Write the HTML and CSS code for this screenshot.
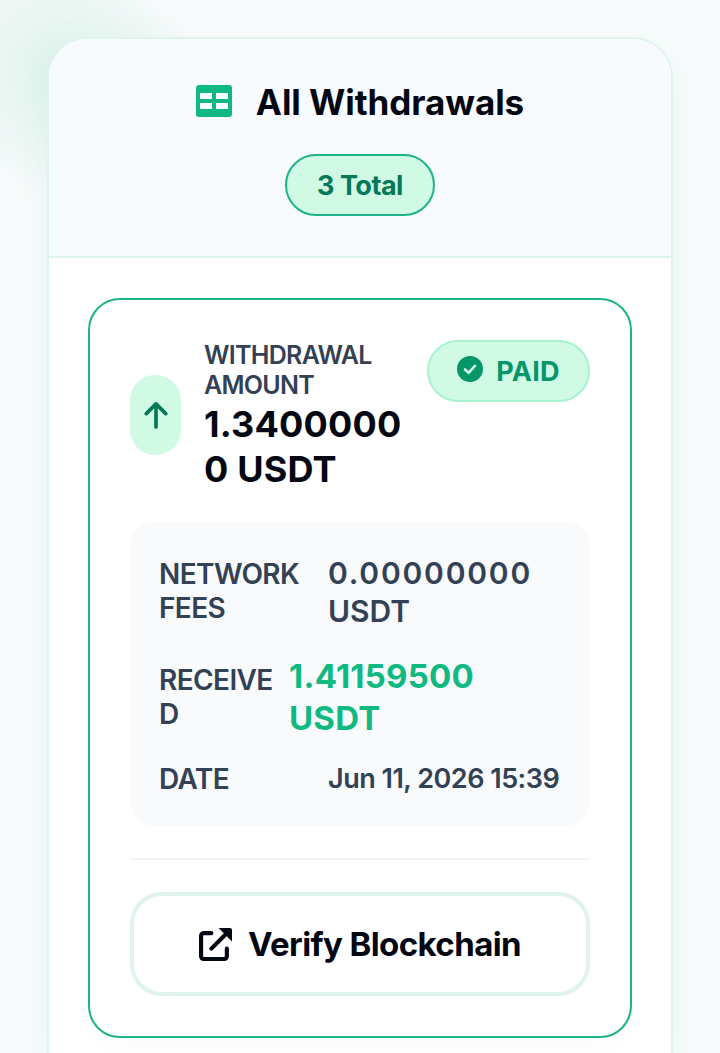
FILE: index.html
```html
<!DOCTYPE html>
<html lang="en">
<head>
    <meta charset="UTF-8">
    <meta name="viewport" content="width=device-width, initial-scale=1.0">
    <title>All Withdrawals</title>
    <link rel="stylesheet" href="styles.css">
</head>
<body>
    <div class="panel">
        <div class="panel-head">
            <h1 class="panel-title">
                <svg class="table-icon" viewBox="0 0 36 32" aria-hidden="true">
                    <path fill-rule="evenodd" fill="#10b981" d="M3 0h30a3 3 0 0 1 3 3v26a3 3 0 0 1-3 3H3a3 3 0 0 1-3-3V3a3 3 0 0 1 3-3zM4 8v6h12V8zM20 8v6h12V8zM4 18v6h12v-6zM20 18v6h12v-6z"/>
                </svg>
                <span>All Withdrawals</span>
            </h1>
            <span class="total-pill">3 Total</span>
        </div>

        <div class="panel-body">
            <div class="tx-card">
                <div class="tx-top">
                    <div class="arrow-box">
                        <svg class="arrow-icon" viewBox="0 0 26 30" aria-hidden="true">
                            <path d="M13 28V3M2.500 13.500 13 3l10.500 10.500" fill="none" stroke="#047857" stroke-width="4" stroke-linecap="round" stroke-linejoin="round"/>
                        </svg>
                    </div>
                    <div class="tx-amount">
                        <div class="tx-label">WITHDRAWAL<br>AMOUNT</div>
                        <div class="tx-value">1.3400000<br>0 USDT</div>
                    </div>
                    <div class="paid-badge">
                        <svg class="check-icon" viewBox="0 0 26 26" aria-hidden="true">
                            <circle cx="13" cy="13" r="13" fill="#059669"/>
                            <path d="M8 13.500l3.500 3.300L18 9.800" fill="none" stroke="#d1fae5" stroke-width="2.600" stroke-linecap="round" stroke-linejoin="round"/>
                        </svg>
                        <span>PAID</span>
                    </div>
                </div>

                <div class="details">
                    <div class="detail-row detail-row-fees">
                        <div class="detail-label">NETWORK<br>FEES</div>
                        <div class="detail-value"><span class="digits">0.00000000</span><br>USDT</div>
                    </div>
                    <div class="detail-row detail-row-wide">
                        <div class="detail-label">RECEIVE<br>D</div>
                        <div class="detail-value detail-value-green">1.41159500<br>USDT</div>
                    </div>
                    <div class="detail-row detail-row-date">
                        <div class="detail-label">DATE</div>
                        <div class="detail-value detail-value-date">Jun 11, 2026 15:39</div>
                    </div>
                </div>

                <div class="divider"></div>

                <a class="verify-btn" href="#">
                    <svg class="link-icon" viewBox="0 0 32 32" aria-hidden="true">
                        <path d="M12 5H4.500A2.500 2.500 0 0 0 2 7.500v20A2.500 2.500 0 0 0 4.500 30h20a2.500 2.500 0 0 0 2.500-2.500V20" fill="none" stroke="#030712" stroke-width="4" stroke-linecap="round"/>
                        <path d="M12 20 25 7" fill="none" stroke="#030712" stroke-width="4" stroke-linecap="round"/>
                        <path d="M19 0h11a2 2 0 0 1 2 2v11z" fill="#030712"/>
                    </svg>
                    <span>Verify Blockchain</span>
                </a>
            </div>
        </div>
    </div>
</body>
</html>
```

FILE: styles.css
```css
/* page */
html, body {
    height: 1053px;
    overflow: hidden;
}

body {
    margin: 0;
    padding: 37px 47px 0;
    box-sizing: border-box;
    background-color: #f8fbfc;
    background-image: radial-gradient(circle at 60px 70px, #dff3ec 0, #eaf6f3 60px, rgba(248, 251, 252, 0) 130px);
    font-family: "Inter", "Liberation Sans", sans-serif;
    color: #030712;
}

/* outer card, cut off by the bottom of the window */
.panel {
    border: 2px solid #e0f4ee;
    border-bottom: none;
    border-radius: 40px 40px 0 0;
    background: #fff;
    overflow: hidden;
    box-shadow: 0 10px 40px rgba(16, 185, 129, 0.07);
}

.panel-head {
    display: flex;
    flex-direction: column;
    align-items: center;
    gap: 30px;
    height: 219px;
    box-sizing: border-box;
    padding-top: 41px;
    background: #f8fbfd;
    border-bottom: 2px solid #dff4ee;
}

.panel-title {
    display: flex;
    align-items: center;
    gap: 24px;
    margin: 0;
    font-size: 35px;
    line-height: 44px;
    font-weight: 700;
    letter-spacing: -0.05px;
}

.table-icon {
    width: 36px;
    height: 32px;
    margin-top: -2px;
}

.total-pill {
    display: block;
    box-sizing: border-box;
    width: 150px;
    height: 62px;
    line-height: 60px;
    text-align: center;
    border: 2px solid #1db489;
    border-radius: 31px;
    background: #d1fae5;
    color: #047857;
    font-size: 27px;
    font-weight: 700;
    letter-spacing: -0.5px;
}

.panel-body {
    padding: 40px 39px 15px;
}

/* withdrawal card */
.tx-card {
    border: 2px solid #1db489;
    border-radius: 32px;
    padding: 40px;
    box-shadow: 0 8px 24px rgba(0, 0, 0, 0.02);
    background: #fff;
}

.tx-top {
    display: flex;
    align-items: flex-start;
}

.arrow-box {
    display: flex;
    align-items: center;
    justify-content: center;
    flex: none;
    width: 51px;
    height: 80px;
    margin-top: 35px;
    border-radius: 25px;
    background: #d1fae5;
}

.arrow-icon {
    width: 24px;
    height: 28px;
}

.tx-amount {
    flex: 1;
    margin-left: 23px;
}

.tx-label {
    font-size: 25px;
    line-height: 30px;
    font-weight: 600;
    letter-spacing: -0.7px;
    color: #334155;
}

.tx-value {
    margin-top: 2px;
    font-size: 36px;
    line-height: 45px;
    font-weight: 700;
    letter-spacing: 0.2px;
    color: #030712;
}

.paid-badge {
    display: flex;
    align-items: center;
    justify-content: center;
    gap: 13px;
    flex: none;
    box-sizing: border-box;
    width: 163px;
    height: 62px;
    border: 2px solid #a7f3d0;
    border-radius: 31px;
    background: #d1fae5;
    color: #059669;
    font-size: 27px;
    font-weight: 700;
    letter-spacing: 0.3px;
}

.check-icon {
    width: 26px;
    height: 26px;
    margin-top: -5px;
}

/* detail box */
.details {
    display: flex;
    flex-direction: column;
    gap: 24px;
    margin-top: 30px;
    padding: 32px 30px 30px 29px;
    border-radius: 24px;
    background: #f8fafc;
}

.detail-row {
    display: grid;
    grid-template-columns: 169px 1fr;
}

.detail-row-wide {
    grid-template-columns: 130px 1fr;
}

.detail-row-date {
    margin-top: -1px;
}

.detail-label {
    font-size: 28px;
    line-height: 34px;
    font-weight: 600;
    letter-spacing: -0.6px;
    color: #334155;
}

.detail-row-fees .detail-label {
    padding-top: 3px;
}

.detail-row-wide .detail-label {
    padding-top: 9px;
}

.detail-value {
    font-size: 30px;
    line-height: 38px;
    font-weight: 600;
    color: #334155;
}

.digits {
    letter-spacing: 1.8px;
}

.detail-value-green {
    padding-top: 1px;
    font-size: 33px;
    line-height: 42px;
    font-weight: 700;
    letter-spacing: 0.2px;
    color: #10b981;
}

.detail-value-date {
    font-size: 27px;
    line-height: 34px;
    letter-spacing: -0.5px;
    white-space: nowrap;
}

.divider {
    height: 2px;
    margin-top: 32px;
    background: #f3f4f6;
}

/* button */
.verify-btn {
    display: flex;
    align-items: center;
    justify-content: center;
    gap: 16px;
    height: 104px;
    box-sizing: border-box;
    margin-top: 32px;
    border: 4px solid #dff4ee;
    border-radius: 32px;
    background: #fff;
    color: #030712;
    font-size: 33px;
    font-weight: 700;
    letter-spacing: -0.6px;
    text-decoration: none;
}

.link-icon {
    width: 33px;
    height: 33px;
}
```
